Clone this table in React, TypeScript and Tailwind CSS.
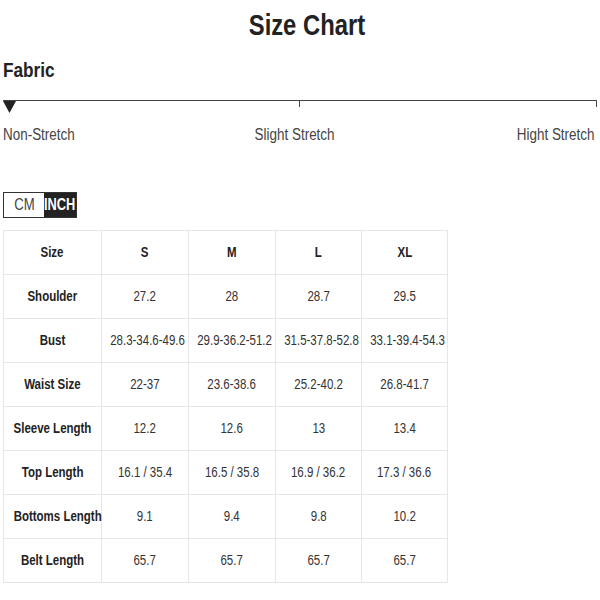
import React from "react";

const sizes = ["S", "M", "L", "XL"];
const rows: [string, string[]][] = [
  ["Shoulder", ["27.2", "28", "28.7", "29.5"]],
  ["Bust", ["28.3-34.6-49.6", "29.9-36.2-51.2", "31.5-37.8-52.8", "33.1-39.4-54.3"]],
  ["Waist Size", ["22-37", "23.6-38.6", "25.2-40.2", "26.8-41.7"]],
  ["Sleeve Length", ["12.2", "12.6", "13", "13.4"]],
  ["Top Length", ["16.1 / 35.4", "16.5 / 35.8", "16.9 / 36.2", "17.3 / 36.6"]],
  ["Bottoms Length", ["9.1", "9.4", "9.8", "10.2"]],
  ["Belt Length", ["65.7", "65.7", "65.7", "65.7"]],
];

export default function App() {
  return (
    <div
      className="w-[600px] h-[600px] bg-white text-[#222] overflow-hidden"
      style={{ fontFamily: '"Liberation Sans", Arial, sans-serif' }}
    >
      <div className="pt-[8px] h-[48px] text-center pl-[14px]">
        <h1 className="inline-block scale-x-[0.82] text-[29px] font-bold leading-[34px] text-[#222]">Size Chart</h1>
      </div>
      <div className="pl-[3px] h-[44px] pt-[10px]">
        <h2 className="inline-block origin-left scale-x-[0.82] text-[21px] font-bold leading-[24px] text-[#222]">Fabric</h2>
      </div>
      <div className="pl-[3px] pr-[3px] pt-[8px]">
        <div className="relative h-[14px] border-t border-[#444]">
          <div className="absolute left-[296px] top-0 w-px h-[6px] bg-[#444]" />
          <div className="absolute right-0 top-0 w-px h-[6px] bg-[#444]" />
          <svg className="absolute left-0 top-0" width="13" height="13" viewBox="0 0 13 13">
            <polygon points="0,0 13,0 6.5,12" fill="#222" />
          </svg>
        </div>
        <div className="flex justify-between text-[16px] leading-[20px] text-[#444] mt-[11px] pr-[3px]">
          <span className="inline-block origin-left scale-x-[0.84]">Non-Stretch</span>
          <span className="inline-block scale-x-[0.84]">Slight Stretch</span>
          <span className="inline-block origin-right scale-x-[0.84]">Hight Stretch</span>
        </div>
      </div>
      <div className="pl-[3px] mt-[47px] flex">
        <div className="flex h-[26px] border border-[#333]">
          <div className="w-[40px] flex items-center justify-center text-[16px] text-[#444] bg-white">
            <span className="inline-block scale-x-[0.82]">CM</span>
          </div>
          <div className="w-[32px] flex items-center justify-center text-[16px] font-bold text-white bg-[#222]">
            <span className="inline-block scale-x-[0.8]">INCH</span>
          </div>
        </div>
      </div>
      <div className="pl-[3px] mt-[12px]">
        <table className="table-fixed w-[444px] border-collapse text-[14px] text-[#333]">
          <colgroup>
            <col className="w-[98px]" />
            <col className="w-[87px]" />
            <col className="w-[87px]" />
            <col className="w-[86px]" />
            <col className="w-[86px]" />
          </colgroup>
          <tbody>
            <tr className="h-[44px]">
              <td className="border border-[#e6e6e6] text-center font-bold text-[#222] p-0 whitespace-nowrap">
                <span className="inline-block scale-x-[0.82]">Size</span>
              </td>
              {sizes.map((s) => (
                <td key={s} className="border border-[#e6e6e6] text-center font-bold text-[#222] p-0 whitespace-nowrap">
                  <span className="inline-block scale-x-[0.82]">{s}</span>
                </td>
              ))}
            </tr>
            {rows.map(([label, vals]) => (
              <tr key={label} className="h-[44px]">
                <td className="border border-[#e6e6e6] text-center font-bold text-[#222] p-0 whitespace-nowrap">
                  <span className="inline-block scale-x-[0.82]">{label}</span>
                </td>
                {vals.map((v, i) => (
                  <td key={i} className="border border-[#e6e6e6] text-center p-0 whitespace-nowrap">
                    <span className="inline-block scale-x-[0.82]">{v}</span>
                  </td>
                ))}
              </tr>
            ))}
          </tbody>
        </table>
      </div>
    </div>
  );
}
